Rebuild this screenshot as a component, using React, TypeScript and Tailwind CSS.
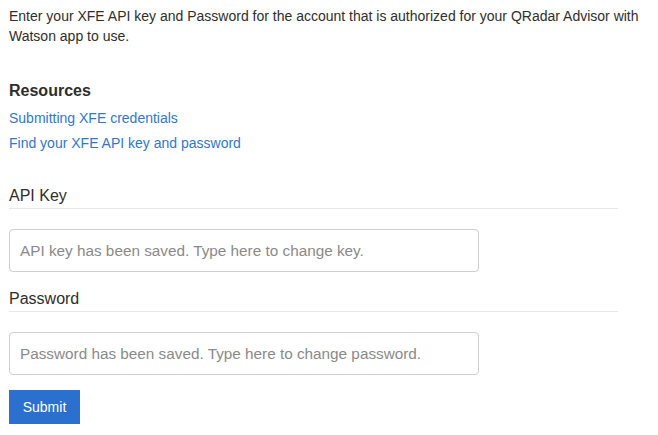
export default function App() {
  return (
    <div className="min-h-screen bg-white pl-[9px] pr-[6px] pt-[6px] font-['Liberation_Sans',Arial,sans-serif] text-[#2e2e2e]">
      <p className="text-[14px] leading-[20px]">
        Enter your XFE API key and Password for the account that is authorized for your QRadar Advisor with Watson app to use.
      </p>

      <h3 className="mt-[34px] text-[16px] font-bold leading-[22px]">Resources</h3>
      <div className="mt-[6px] flex flex-col gap-[5px] text-[14px] leading-[20px]">
        <a href="#" className="w-fit text-[#2f78d2]">
          Submitting XFE credentials
        </a>
        <a href="#" className="w-fit text-[#2f78d2]">
          Find your XFE API key and password
        </a>
      </div>

      <form className="mt-[32px] w-[609px]">
        <label className="block border-b border-[#e8e8e8] pb-px text-[16px] leading-[22px]">API Key</label>
        <input
          type="password"
          placeholder="API key has been saved. Type here to change key."
          className="mt-[20px] h-[43px] w-[470px] rounded-[4px] border border-[#cfcfcf] px-[10px] text-[15.3px] outline-none placeholder:text-[#8a8a8a]"
        />

        <label className="mt-[16px] block border-b border-[#e8e8e8] pb-px text-[16px] leading-[22px]">Password</label>
        <input
          type="password"
          placeholder="Password has been saved. Type here to change password."
          className="mt-[20px] h-[43px] w-[470px] rounded-[4px] border border-[#cfcfcf] px-[10px] text-[15.3px] outline-none placeholder:text-[#8a8a8a]"
        />

        <button
          type="submit"
          className="mt-[15px] block h-[34px] w-[71px] bg-[#2b70cf] text-[14px] text-white"
        >
          Submit
        </button>
      </form>
    </div>
  );
}
